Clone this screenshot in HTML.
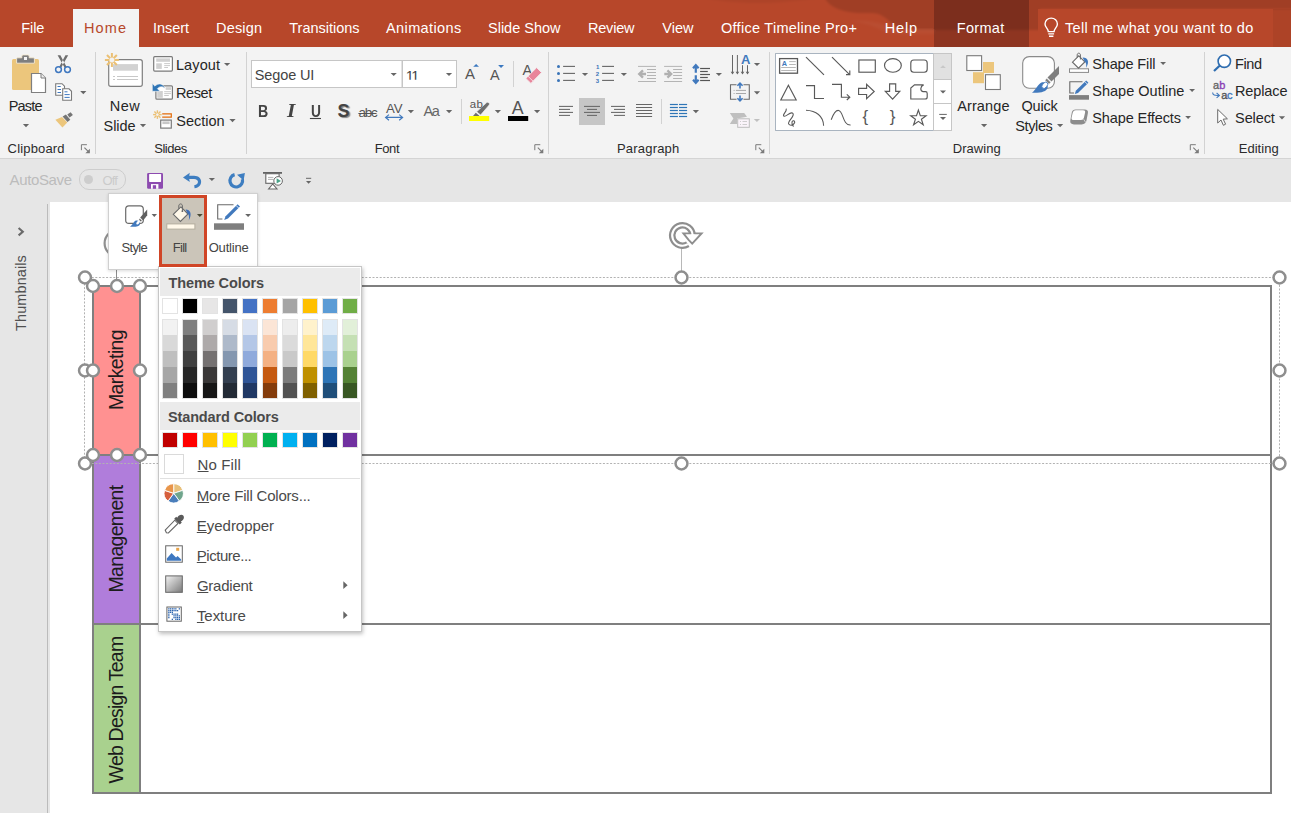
<!DOCTYPE html>
<html lang="en"><head><meta charset="utf-8"><title>PowerPoint - Shape Fill</title>
<style>
html,body{margin:0;padding:0;}
body{width:1291px;height:813px;overflow:hidden;position:relative;background:#fff;font-family:"Liberation Sans", sans-serif;}
.a{position:absolute;}
.t{position:absolute;white-space:nowrap;line-height:1;}
svg{position:absolute;overflow:visible;}
u{text-decoration:underline;text-underline-offset:1px;text-decoration-thickness:1px;}

.hd{fill:#fff;stroke:#8e8e8e;stroke-width:2.5;}

</style></head><body>
<div class="a" style="left:0;top:0;width:1291px;height:47px;background:#B7472A"></div><div class="a" style="left:934px;top:0;width:95px;height:47px;background:#8E3521"></div><svg class="a" style="left:0;top:0" width="1291" height="47"><defs><filter id="bl" x="-5%" y="-30%" width="110%" height="160%"><feGaussianBlur stdDeviation="1.2"/></filter></defs><g filter="url(#bl)"><path d="M824 -3 C 830 9, 846 14, 872 13 C 888 13, 892 30, 908 30 L 1040 30 L 1040 9 L 1300 9 L 1300 -3 Z" fill="rgba(0,0,0,0.125)"/><path d="M700 -3 C 730 4, 770 6, 824 -3 Z" fill="rgba(0,0,0,0.05)"/><path d="M846 22 C 870 20, 880 34, 900 34 L 934 34 L 934 30 L 905 30 C 890 30, 880 17, 846 22 Z" fill="rgba(255,255,255,0.03)"/></g><rect x="1273" y="9" width="18" height="38" fill="rgba(0,0,0,0.05)"/></svg><div class="a" style="left:1038px;top:9px;width:235px;height:38px;background:#B7472A"></div><svg class="a" style="left:0;top:0" width="1291" height="47"><path d="M1048.3 31.6 C1048.3 28.6 1045 27.6 1045 23.9 C1045 20.6 1047.8 18.1 1051.2 18.1 C1054.6 18.1 1057.4 20.6 1057.4 23.9 C1057.4 27.6 1054.1 28.6 1054.1 31.6 Z M1048.3 33.9 H1054.1 M1049 36.2 H1053.4" fill="none" stroke="#fff" stroke-width="1.4"/></svg><div class="a" style="left:73px;top:9px;width:66px;height:38px;background:#F3F3F3"></div><div class="a" style="left:0;top:47px;width:1291px;height:111px;background:#F3F3F3"></div><div class="a" style="left:0;top:158px;width:1291px;height:1px;background:#D4D4D4"></div><div class="a" style="left:0;top:159px;width:1291px;height:43px;background:#E6E6E6"></div><div class="a" style="left:0;top:202px;width:50px;height:611px;background:#E6E6E6"></div><div class="a" style="left:47px;top:204px;width:1px;height:609px;background:#BBBBBB"></div><div class="a" style="left:95px;top:52px;width:1px;height:102px;background:#D2D2D2"></div><div class="a" style="left:246px;top:52px;width:1px;height:102px;background:#D2D2D2"></div><div class="a" style="left:548px;top:52px;width:1px;height:102px;background:#D2D2D2"></div><div class="a" style="left:769px;top:52px;width:1px;height:102px;background:#D2D2D2"></div><div class="a" style="left:1204px;top:52px;width:1px;height:102px;background:#D2D2D2"></div><div class="a" style="left:92px;top:285px;width:1176px;height:505px;border:2px solid #7F7F7F;box-sizing:content-box"></div><div class="a" style="left:92px;top:454px;width:1180px;height:2px;background:#7F7F7F"></div><div class="a" style="left:92px;top:623px;width:1180px;height:2px;background:#7F7F7F"></div><div class="a" style="left:139px;top:285px;width:2px;height:508px;background:#7F7F7F"></div><div class="a" style="left:94px;top:287px;width:45px;height:167px;background:#FF9191"></div><div class="a" style="left:94px;top:456px;width:45px;height:167px;background:#B07DDB"></div><div class="a" style="left:94px;top:625px;width:45px;height:167px;background:#A9D18E"></div><div class="a" style="left:117px;top:370px;width:0;height:0;"><div style="position:absolute;transform:translate(-50%,-50%) rotate(-90deg);white-space:nowrap;font-size:19.5px;letter-spacing:-0.6px;color:#1c1c1c;line-height:1">Marketing</div></div><div class="a" style="left:117px;top:539px;width:0;height:0;"><div style="position:absolute;transform:translate(-50%,-50%) rotate(-90deg);white-space:nowrap;font-size:19.5px;letter-spacing:-0.69px;color:#1c1c1c;line-height:1">Management</div></div><div class="a" style="left:117px;top:709.6px;width:0;height:0;"><div style="position:absolute;transform:translate(-50%,-50%) rotate(-90deg);white-space:nowrap;font-size:19.5px;letter-spacing:-0.79px;color:#1c1c1c;line-height:1">Web Design Team</div></div><svg class="a" style="left:0;top:0" width="1291" height="813"><rect x="84.5" y="277.5" width="1195" height="186" fill="none" stroke="#b2b2b2" stroke-width="1" stroke-dasharray="2 1.6"/><line x1="681.5" y1="248" x2="681.5" y2="272" stroke="#b8b8b8" stroke-width="1"/><line x1="116.5" y1="256" x2="116.5" y2="280" stroke="#8c8c8c" stroke-width="1"/><circle cx="118" cy="243.3" r="13.4" fill="#fff" stroke="#909090" stroke-width="2.2"/><circle class="hd" cx="85" cy="277.5" r="5.95"/><circle class="hd" cx="681.5" cy="277.5" r="5.95"/><circle class="hd" cx="1279.5" cy="277.5" r="5.95"/><circle class="hd" cx="85" cy="370.5" r="5.95"/><circle class="hd" cx="1279.5" cy="370.5" r="5.95"/><circle class="hd" cx="85" cy="463.5" r="5.95"/><circle class="hd" cx="681.5" cy="463.5" r="5.95"/><circle class="hd" cx="1279.5" cy="463.5" r="5.95"/><circle class="hd" cx="93" cy="286" r="5.95"/><circle class="hd" cx="117" cy="286" r="5.95"/><circle class="hd" cx="140" cy="286" r="5.95"/><circle class="hd" cx="93" cy="370.5" r="5.95"/><circle class="hd" cx="140" cy="370.5" r="5.95"/><circle class="hd" cx="93" cy="455" r="5.95"/><circle class="hd" cx="117" cy="455" r="5.95"/><circle class="hd" cx="140" cy="455" r="5.95"/><path d="M687.81 244.15 A10.2 10.2 0 1 1 692.60 235.00" fill="none" stroke="#8e8e8e" stroke-width="6.5"/><path d="M683.4 233.4 H701.6 L692.2 243.6 L688.6 239.8 Z" fill="#fff" stroke="#8e8e8e" stroke-width="1.9" stroke-linejoin="miter"/><path d="M687.81 244.15 A10.2 10.2 0 1 1 692.60 235.00" fill="none" stroke="#fff" stroke-width="2.1"/><path d="M690.6 234.6 L694.6 234.6 L694.2 238.6 Z" fill="#fff"/></svg><div class="a" style="left:108px;top:193px;width:148px;height:75px;background:#fff;border:1px solid #D0D0D0;box-shadow:0 1px 3px rgba(0,0,0,0.15)"></div><div class="a" style="left:158px;top:266px;width:202px;height:364px;background:#fff;border:1px solid #C6C6C6;box-shadow:1px 2px 4px rgba(0,0,0,0.25)"></div><div class="a" style="left:160px;top:268px;width:200px;height:28px;background:#EBEBEB"></div><div class="a" style="left:160px;top:402px;width:200px;height:28px;background:#EBEBEB"></div><div class="a" style="left:159px;top:195px;width:42px;height:66px;background:#CBC5B9;border:3px solid #D04526"></div><svg class="a" style="left:0;top:0" width="400" height="270"><rect x="125.7" y="205.8" width="17.6" height="17.6" rx="3.2" fill="#fff" stroke="#6a6a6a" stroke-width="1.2"/><path d="M147.2 209.6 V215.2 L143.2 220.4 L140.2 217.6 Z" fill="#5f5f5f"/><path d="M142 220.6 L140.9 221.8 L138.8 219.8 L139.9 218.6 Z" fill="#5f5f5f" stroke="#fff" stroke-width="0.4"/><path d="M130 226.7 C133 224.6 133.6 221.6 135.8 220.6 C138.2 219.8 140.6 221.8 140 224.2 C139.2 226.6 135.6 227 130 226.7 Z" fill="#4179BD"/><ellipse cx="138" cy="222.6" rx="1.3" ry="2.2" transform="rotate(40 138 222.6)" fill="#fff"/><path d="M151.6 214.1 h5.4 l-2.7 3 Z" fill="#666666"/><rect x="166.8" y="223.9" width="28.1" height="5.2" fill="#FFF8E9" stroke="#B3AD9E" stroke-width="1"/><path d="M180.9 206.9 L188 214 L180.4 221.4 L173.3 214.3 Z" fill="#FFF8E9" stroke="#6a6a6a" stroke-width="1.1"/><path d="M182.4 211 V206 C182.4 203.2 178.8 203.2 178.8 206 V208.8" fill="none" stroke="#6a6a6a" stroke-width="1"/><circle cx="182.4" cy="211.2" r="0.9" fill="#6a6a6a"/><path d="M185.6 209.4 C190 209.2 192.6 213.6 188.8 220.4 C189.4 216.6 189 214.4 187.4 213.2 Z" fill="#3F6FB5"/><path d="M196.9 214.1 h5.8 l-2.9 3 Z" fill="#4a4a35"/><path d="M233.5 204.8 H217.7 V219 H222.4" fill="none" stroke="#6a6a6a" stroke-width="1.1"/><path d="M237.6 204.2 L240 206.6 L228 218.6 L224.2 220 L225.6 216.2 Z" fill="#4179BD"/><path d="M236.2 205.6 L238.6 208" stroke="#fff" stroke-width="0.8"/><rect x="214" y="223.3" width="30" height="6.5" fill="#7F7F7F"/><path d="M245.2 214.1 h5.8 l-2.9 3 Z" fill="#666666"/></svg><div class="a" style="left:162px;top:298px;width:14px;height:14px;background:#FFFFFF;border:1px solid #E3E3E3"></div><div class="a" style="left:162px;top:319px;width:14px;height:78px;border:1px solid #E3E3E3"></div><div class="a" style="left:163px;top:320px;width:14px;height:15px;background:#F2F2F2"></div><div class="a" style="left:163px;top:335px;width:14px;height:16px;background:#D9D9D9"></div><div class="a" style="left:163px;top:351px;width:14px;height:16px;background:#BFBFBF"></div><div class="a" style="left:163px;top:367px;width:14px;height:16px;background:#A6A6A6"></div><div class="a" style="left:163px;top:383px;width:14px;height:15px;background:#7F7F7F"></div><div class="a" style="left:162px;top:432px;width:14px;height:14px;background:#C00000;border:1px solid #E3E3E3"></div><div class="a" style="left:182px;top:298px;width:14px;height:14px;background:#000000;border:1px solid #E3E3E3"></div><div class="a" style="left:182px;top:319px;width:14px;height:78px;border:1px solid #E3E3E3"></div><div class="a" style="left:183px;top:320px;width:14px;height:15px;background:#7F7F7F"></div><div class="a" style="left:183px;top:335px;width:14px;height:16px;background:#595959"></div><div class="a" style="left:183px;top:351px;width:14px;height:16px;background:#404040"></div><div class="a" style="left:183px;top:367px;width:14px;height:16px;background:#262626"></div><div class="a" style="left:183px;top:383px;width:14px;height:15px;background:#0D0D0D"></div><div class="a" style="left:182px;top:432px;width:14px;height:14px;background:#FF0000;border:1px solid #E3E3E3"></div><div class="a" style="left:202px;top:298px;width:14px;height:14px;background:#E7E6E6;border:1px solid #E3E3E3"></div><div class="a" style="left:202px;top:319px;width:14px;height:78px;border:1px solid #E3E3E3"></div><div class="a" style="left:203px;top:320px;width:14px;height:15px;background:#D0CECE"></div><div class="a" style="left:203px;top:335px;width:14px;height:16px;background:#AEAAAA"></div><div class="a" style="left:203px;top:351px;width:14px;height:16px;background:#757171"></div><div class="a" style="left:203px;top:367px;width:14px;height:16px;background:#3A3838"></div><div class="a" style="left:203px;top:383px;width:14px;height:15px;background:#161616"></div><div class="a" style="left:202px;top:432px;width:14px;height:14px;background:#FFC000;border:1px solid #E3E3E3"></div><div class="a" style="left:222px;top:298px;width:14px;height:14px;background:#44546A;border:1px solid #E3E3E3"></div><div class="a" style="left:222px;top:319px;width:14px;height:78px;border:1px solid #E3E3E3"></div><div class="a" style="left:223px;top:320px;width:14px;height:15px;background:#D6DCE5"></div><div class="a" style="left:223px;top:335px;width:14px;height:16px;background:#ADB9CA"></div><div class="a" style="left:223px;top:351px;width:14px;height:16px;background:#8497B0"></div><div class="a" style="left:223px;top:367px;width:14px;height:16px;background:#333F50"></div><div class="a" style="left:223px;top:383px;width:14px;height:15px;background:#222A35"></div><div class="a" style="left:222px;top:432px;width:14px;height:14px;background:#FFFF00;border:1px solid #E3E3E3"></div><div class="a" style="left:242px;top:298px;width:14px;height:14px;background:#4472C4;border:1px solid #E3E3E3"></div><div class="a" style="left:242px;top:319px;width:14px;height:78px;border:1px solid #E3E3E3"></div><div class="a" style="left:243px;top:320px;width:14px;height:15px;background:#DAE3F3"></div><div class="a" style="left:243px;top:335px;width:14px;height:16px;background:#B4C7E7"></div><div class="a" style="left:243px;top:351px;width:14px;height:16px;background:#8FAADC"></div><div class="a" style="left:243px;top:367px;width:14px;height:16px;background:#2F5597"></div><div class="a" style="left:243px;top:383px;width:14px;height:15px;background:#203864"></div><div class="a" style="left:242px;top:432px;width:14px;height:14px;background:#92D050;border:1px solid #E3E3E3"></div><div class="a" style="left:262px;top:298px;width:14px;height:14px;background:#ED7D31;border:1px solid #E3E3E3"></div><div class="a" style="left:262px;top:319px;width:14px;height:78px;border:1px solid #E3E3E3"></div><div class="a" style="left:263px;top:320px;width:14px;height:15px;background:#FBE5D6"></div><div class="a" style="left:263px;top:335px;width:14px;height:16px;background:#F8CBAD"></div><div class="a" style="left:263px;top:351px;width:14px;height:16px;background:#F4B183"></div><div class="a" style="left:263px;top:367px;width:14px;height:16px;background:#C55A11"></div><div class="a" style="left:263px;top:383px;width:14px;height:15px;background:#843C0C"></div><div class="a" style="left:262px;top:432px;width:14px;height:14px;background:#00B050;border:1px solid #E3E3E3"></div><div class="a" style="left:282px;top:298px;width:14px;height:14px;background:#A5A5A5;border:1px solid #E3E3E3"></div><div class="a" style="left:282px;top:319px;width:14px;height:78px;border:1px solid #E3E3E3"></div><div class="a" style="left:283px;top:320px;width:14px;height:15px;background:#EDEDED"></div><div class="a" style="left:283px;top:335px;width:14px;height:16px;background:#DBDBDB"></div><div class="a" style="left:283px;top:351px;width:14px;height:16px;background:#C9C9C9"></div><div class="a" style="left:283px;top:367px;width:14px;height:16px;background:#7C7C7C"></div><div class="a" style="left:283px;top:383px;width:14px;height:15px;background:#525252"></div><div class="a" style="left:282px;top:432px;width:14px;height:14px;background:#00B0F0;border:1px solid #E3E3E3"></div><div class="a" style="left:302px;top:298px;width:14px;height:14px;background:#FFC000;border:1px solid #E3E3E3"></div><div class="a" style="left:302px;top:319px;width:14px;height:78px;border:1px solid #E3E3E3"></div><div class="a" style="left:303px;top:320px;width:14px;height:15px;background:#FFF2CC"></div><div class="a" style="left:303px;top:335px;width:14px;height:16px;background:#FFE699"></div><div class="a" style="left:303px;top:351px;width:14px;height:16px;background:#FFD966"></div><div class="a" style="left:303px;top:367px;width:14px;height:16px;background:#BF9000"></div><div class="a" style="left:303px;top:383px;width:14px;height:15px;background:#7F6000"></div><div class="a" style="left:302px;top:432px;width:14px;height:14px;background:#0070C0;border:1px solid #E3E3E3"></div><div class="a" style="left:322px;top:298px;width:14px;height:14px;background:#5B9BD5;border:1px solid #E3E3E3"></div><div class="a" style="left:322px;top:319px;width:14px;height:78px;border:1px solid #E3E3E3"></div><div class="a" style="left:323px;top:320px;width:14px;height:15px;background:#DEEBF7"></div><div class="a" style="left:323px;top:335px;width:14px;height:16px;background:#BDD7EE"></div><div class="a" style="left:323px;top:351px;width:14px;height:16px;background:#9DC3E6"></div><div class="a" style="left:323px;top:367px;width:14px;height:16px;background:#2E75B6"></div><div class="a" style="left:323px;top:383px;width:14px;height:15px;background:#1F4E79"></div><div class="a" style="left:322px;top:432px;width:14px;height:14px;background:#002060;border:1px solid #E3E3E3"></div><div class="a" style="left:342px;top:298px;width:14px;height:14px;background:#70AD47;border:1px solid #E3E3E3"></div><div class="a" style="left:342px;top:319px;width:14px;height:78px;border:1px solid #E3E3E3"></div><div class="a" style="left:343px;top:320px;width:14px;height:15px;background:#E2F0D9"></div><div class="a" style="left:343px;top:335px;width:14px;height:16px;background:#C5E0B4"></div><div class="a" style="left:343px;top:351px;width:14px;height:16px;background:#A9D18E"></div><div class="a" style="left:343px;top:367px;width:14px;height:16px;background:#548235"></div><div class="a" style="left:343px;top:383px;width:14px;height:15px;background:#385723"></div><div class="a" style="left:342px;top:432px;width:14px;height:14px;background:#7030A0;border:1px solid #E3E3E3"></div><div class="a" style="left:164px;top:454px;width:18px;height:18px;background:#fff;border:1px solid #DADADA"></div><div class="a" style="left:160px;top:478px;width:200px;height:1px;background:#E1E1E1"></div><svg class="a" style="left:0;top:0" width="400" height="640"><path d="M173.7 493.3 L173.70 483.70 A9.6 9.6 0 0 1 182.83 490.33 Z" fill="#E8C07A" stroke="#fff" stroke-width="0.9"/><path d="M173.7 493.3 L182.83 490.33 A9.6 9.6 0 0 1 179.34 501.07 Z" fill="#6FA58C" stroke="#fff" stroke-width="0.9"/><path d="M173.7 493.3 L179.34 501.07 A9.6 9.6 0 0 1 168.06 501.07 Z" fill="#4A7EBB" stroke="#fff" stroke-width="0.9"/><path d="M173.7 493.3 L168.06 501.07 A9.6 9.6 0 0 1 164.57 490.33 Z" fill="#D65F3C" stroke="#fff" stroke-width="0.9"/><path d="M173.7 493.3 L164.57 490.33 A9.6 9.6 0 0 1 173.70 483.70 Z" fill="#E8954A" stroke="#fff" stroke-width="0.9"/><path d="M166.4 532.8 L165.2 530 L174.8 520.2 L178 523.4 L168.4 533 Z" fill="#fff" stroke="#666" stroke-width="1.1"/><path d="M174.2 518.8 L176.2 516.8 L177.2 517.8 C178.4 515 181.6 513.8 183.2 515.4 C184.8 517 183.6 520.2 180.8 521.4 L181.8 522.4 L179.8 524.4 Z" fill="#5a5a5a"/><rect x="165.7" y="545.8" width="16.6" height="16.4" fill="#fff" stroke="#666" stroke-width="1"/><path d="M166.8 560.8 V558.4 L171.6 553 L176 557.6 L177.6 556 L181.2 559.6 V560.8 Z" fill="#3F78C0"/><rect x="176.2" y="547.8" width="3" height="3" fill="#E8A44A"/><defs><linearGradient id="gg" x1="0" y1="0" x2="1" y2="1"><stop offset="0" stop-color="#F4F4F4"/><stop offset="1" stop-color="#7A7A7A"/></linearGradient></defs><rect x="165.7" y="575.9" width="16.6" height="16.4" fill="url(#gg)" stroke="#666" stroke-width="1"/><rect x="166.9" y="607" width="14.4" height="14.2" fill="#fff" stroke="#666" stroke-width="1"/><rect x="168.2" y="608.2" width="1.3" height="1.3" fill="#2F66B0"/><rect x="169.9" y="608.2" width="1.3" height="1.3" fill="#2F66B0"/><rect x="171.7" y="608.2" width="1.3" height="1.3" fill="#2F66B0"/><rect x="173.4" y="608.2" width="1.3" height="1.3" fill="#2F66B0"/><rect x="175.2" y="608.2" width="1.3" height="1.3" fill="#2F66B0"/><rect x="178.7" y="608.2" width="1.3" height="1.3" fill="#2F66B0"/><rect x="168.2" y="610.0" width="1.3" height="1.3" fill="#2F66B0"/><rect x="169.9" y="610.0" width="1.3" height="1.3" fill="#2F66B0"/><rect x="171.7" y="610.0" width="1.3" height="1.3" fill="#2F66B0"/><rect x="173.4" y="610.0" width="1.3" height="1.3" fill="#2F66B0"/><rect x="175.2" y="610.0" width="1.3" height="1.3" fill="#2F66B0"/><rect x="176.9" y="610.0" width="1.3" height="1.3" fill="#2F66B0"/><rect x="168.2" y="611.7" width="1.3" height="1.3" fill="#2F66B0"/><rect x="169.9" y="611.7" width="1.3" height="1.3" fill="#2F66B0"/><rect x="171.7" y="611.7" width="1.3" height="1.3" fill="#2F66B0"/><rect x="168.2" y="613.5" width="1.3" height="1.3" fill="#2F66B0"/><rect x="171.7" y="613.5" width="1.3" height="1.3" fill="#2F66B0"/><rect x="173.4" y="613.5" width="1.3" height="1.3" fill="#2F66B0"/><rect x="175.2" y="613.5" width="1.3" height="1.3" fill="#2F66B0"/><rect x="176.9" y="613.5" width="1.3" height="1.3" fill="#2F66B0"/><rect x="168.2" y="615.2" width="1.3" height="1.3" fill="#2F66B0"/><rect x="173.4" y="615.2" width="1.3" height="1.3" fill="#2F66B0"/><rect x="175.2" y="615.2" width="1.3" height="1.3" fill="#2F66B0"/><rect x="176.9" y="615.2" width="1.3" height="1.3" fill="#2F66B0"/><rect x="178.7" y="615.2" width="1.3" height="1.3" fill="#2F66B0"/><rect x="168.2" y="617.0" width="1.3" height="1.3" fill="#2F66B0"/><rect x="173.4" y="617.0" width="1.3" height="1.3" fill="#2F66B0"/><rect x="175.2" y="617.0" width="1.3" height="1.3" fill="#2F66B0"/><rect x="176.9" y="617.0" width="1.3" height="1.3" fill="#2F66B0"/><rect x="178.7" y="617.0" width="1.3" height="1.3" fill="#2F66B0"/><rect x="171.7" y="618.7" width="1.3" height="1.3" fill="#2F66B0"/><rect x="175.2" y="618.7" width="1.3" height="1.3" fill="#2F66B0"/><rect x="176.9" y="618.7" width="1.3" height="1.3" fill="#2F66B0"/><rect x="178.7" y="618.7" width="1.3" height="1.3" fill="#2F66B0"/></svg><svg class="a" style="left:343px;top:581px" width="8" height="10"><path d="M0.3 0.3 L4.6 4.2 L0.3 8.1 Z" fill="#666"/></svg><svg class="a" style="left:343px;top:611px" width="8" height="10"><path d="M0.3 0.3 L4.6 4.2 L0.3 8.1 Z" fill="#666"/></svg><div class="a" style="left:79px;top:169px;width:45px;height:19px;border:1px solid #CDCDCD;border-radius:10px"></div><div class="a" style="left:84px;top:175px;width:9px;height:9px;background:#CDCDCD;border-radius:5px"></div><div class="a" style="left:21.4px;top:292.8px;width:0;height:0;"><div style="position:absolute;transform:translate(-50%,-50%) rotate(-90deg);white-space:nowrap;font-size:14.5px;letter-spacing:0.1px;color:#505050;line-height:1">Thumbnails</div></div><svg class="a" style="left:0px;top:0px" width="50" height="300"><path d="M18.6 228 L22.8 231.7 L18.6 235.4" fill="none" stroke="#6a6a6a" stroke-width="2.1"/></svg><svg class="a" style="left:0;top:0" width="1291" height="160"><rect x="12" y="59" width="27" height="31" rx="1.5" fill="#ECC67C"/><path d="M16.6 63.2 V58.8 Q16.6 57.8 17.6 57.8 H21.8 V56.2 Q21.8 54.9 23.2 54.9 H27.8 Q29.2 54.9 29.2 56.2 V57.8 H33.4 Q34.4 57.8 34.4 58.8 V63.2 Z" fill="#7F7F7F" stroke="#F6EBD2" stroke-width="0.9"/><rect x="24" y="57" width="3" height="3" fill="#F3F3F3"/><path d="M31.5 73.5 H41 L45.5 78 V92.5 H31.5 Z" fill="#fff" stroke="#7F7F7F" stroke-width="1.2"/><path d="M41 73.5 V78 H45.5" fill="#EDEDED" stroke="#7F7F7F" stroke-width="1"/><path d="M22.9 124 h6.2 l-3.1 3.2 Z" fill="#666666"/><path d="M57.6 55.2 H60.4 L66.6 67 L64.8 68 Z M68.2 55.2 H65.4 L59.2 67 L61 68 Z" fill="#6E6E6E"/><circle cx="58.5" cy="69.6" r="2.9" fill="none" stroke="#3F78C0" stroke-width="1.5"/><circle cx="67.5" cy="69.6" r="2.9" fill="none" stroke="#3F78C0" stroke-width="1.5"/><path d="M55.7 83.7 H62 L64.5 86.2 V95.3 H55.7 Z" fill="#fff" stroke="#7a7a7a" stroke-width="1.1"/><path d="M57.5 86.5 h3.2 M57.5 89.5 h3.5 M57.5 92.5 h3.5" stroke="#3F78C0" stroke-width="1"/><path d="M62.7 88.8 H69 L71.5 91.3 V100.3 H62.7 Z" fill="#fff" stroke="#7a7a7a" stroke-width="1.1"/><path d="M64.5 91.8 h3 M64.5 94.6 h5.2 M64.5 97.4 h5.2" stroke="#3F78C0" stroke-width="1"/><path d="M80.2 91 h6.2 l-3.1 3.2 Z" fill="#666666"/><path d="M55.4 119.8 L62 117 L67.3 122.4 L62.4 127.4 Z" fill="#ECC67C"/><path d="M62.6 116.5 L65.9 114.5 L70.3 119.8 L67.5 122 Z" fill="#757575"/><path d="M67.3 114.4 L70.6 112.2 L72.9 115.1 L69.5 117.4 Z" fill="#757575"/><path d="M81.4 150.2 V144.7 H86.9" fill="none" stroke="#7a7a7a" stroke-width="1"/><path d="M84.4 147.7 L88.9 152.2" stroke="#7a7a7a" stroke-width="1.1"/><path d="M89.9 148.7 V153.2 H85.4 Z" fill="#7a7a7a"/><rect x="108.7" y="59.6" width="33.6" height="26.8" rx="2.2" fill="#fff" stroke="#7F7F7F" stroke-width="1.2"/><rect x="113" y="64.1" width="25" height="6.6" fill="#D2D2D2"/><line x1="113" y1="76.5" x2="115" y2="76.5" stroke="#C8C8C8" stroke-width="1"/><line x1="117" y1="76.5" x2="138" y2="76.5" stroke="#C8C8C8" stroke-width="1"/><line x1="113" y1="79.5" x2="115" y2="79.5" stroke="#C8C8C8" stroke-width="1"/><line x1="117" y1="79.5" x2="138" y2="79.5" stroke="#C8C8C8" stroke-width="1"/><circle cx="111.9" cy="60" r="3.5" fill="#F3F3F3"/><line x1="114.30" y1="60.00" x2="118.90" y2="60.00" stroke="#EBC074" stroke-width="2"/><line x1="113.60" y1="61.70" x2="116.85" y2="64.95" stroke="#EBC074" stroke-width="2"/><line x1="111.90" y1="62.40" x2="111.90" y2="67.00" stroke="#EBC074" stroke-width="2"/><line x1="110.20" y1="61.70" x2="106.95" y2="64.95" stroke="#EBC074" stroke-width="2"/><line x1="109.50" y1="60.00" x2="104.90" y2="60.00" stroke="#EBC074" stroke-width="2"/><line x1="110.20" y1="58.30" x2="106.95" y2="55.05" stroke="#EBC074" stroke-width="2"/><line x1="111.90" y1="57.60" x2="111.90" y2="53.00" stroke="#EBC074" stroke-width="2"/><line x1="113.60" y1="58.30" x2="116.85" y2="55.05" stroke="#EBC074" stroke-width="2"/><path d="M139.9 124 h6.2 l-3.1 3.2 Z" fill="#666666"/><rect x="153.7" y="56.7" width="18.7" height="14.4" rx="1" fill="#fff" stroke="#7a7a7a" stroke-width="1.2"/><rect x="156.2" y="58.4" width="13.8" height="3.4" fill="#D0D0D0"/><rect x="156.2" y="63.3" width="5.6" height="5.6" fill="#D0D0D0"/><line x1="164.2" y1="63.6" x2="170" y2="63.6" stroke="#C4C4C4" stroke-width="0.9"/><line x1="164.2" y1="65.6" x2="170" y2="65.6" stroke="#C4C4C4" stroke-width="0.9"/><line x1="164.2" y1="67.5" x2="168" y2="67.5" stroke="#C4C4C4" stroke-width="0.9"/><path d="M224 62.9 h6.2 l-3.1 3.2 Z" fill="#666666"/><rect x="155.9" y="85.8" width="16.5" height="13.4" rx="1" fill="#fff" stroke="#7a7a7a" stroke-width="1.2"/><rect x="157.2" y="91" width="5.6" height="6.8" fill="#D0D0D0"/><rect x="165.7" y="87.2" width="5.3" height="2.7" fill="#D0D0D0"/><line x1="164.2" y1="91.7" x2="171" y2="91.7" stroke="#C4C4C4" stroke-width="0.9"/><line x1="164.2" y1="93.6" x2="171" y2="93.6" stroke="#C4C4C4" stroke-width="0.9"/><line x1="164.2" y1="95.5" x2="168.8" y2="95.5" stroke="#C4C4C4" stroke-width="0.9"/><path d="M152.3 83.5 V91.3 H160 L157.4 88.7 C159.5 86.2 162.5 86 165.2 88.3 C163.5 83.6 158 82.3 155 86.2 Z" fill="#2E75B6" stroke="#F3F3F3" stroke-width="0.6"/><line x1="158.70" y1="114.60" x2="161.70" y2="114.60" stroke="#EBC074" stroke-width="1.4"/><line x1="158.32" y1="115.52" x2="160.44" y2="117.64" stroke="#EBC074" stroke-width="1.4"/><line x1="157.40" y1="115.90" x2="157.40" y2="118.90" stroke="#EBC074" stroke-width="1.4"/><line x1="156.48" y1="115.52" x2="154.36" y2="117.64" stroke="#EBC074" stroke-width="1.4"/><line x1="156.10" y1="114.60" x2="153.10" y2="114.60" stroke="#EBC074" stroke-width="1.4"/><line x1="156.48" y1="113.68" x2="154.36" y2="111.56" stroke="#EBC074" stroke-width="1.4"/><line x1="157.40" y1="113.30" x2="157.40" y2="110.30" stroke="#EBC074" stroke-width="1.4"/><line x1="158.32" y1="113.68" x2="160.44" y2="111.56" stroke="#EBC074" stroke-width="1.4"/><path d="M162.2 113.8 H171.3 V117.2 H162.2" fill="none" stroke="#E36C0A" stroke-width="1.2"/><rect x="160.7" y="120.1" width="10.6" height="8" fill="#fff" stroke="#7a7a7a" stroke-width="1.2"/><rect x="162.4" y="121.4" width="7.2" height="2.7" fill="#C8C8C8"/><path d="M229.4 119 h6.2 l-3.1 3.2 Z" fill="#666666"/><rect x="251.5" y="60.5" width="150.5" height="27" fill="#fff" stroke="#C6C6C6" stroke-width="1"/><rect x="402.5" y="60.5" width="54" height="27" fill="#fff" stroke="#C6C6C6" stroke-width="1"/><path d="M390.6 72.9 h6.2 l-3.1 3.2 Z" fill="#666666"/><path d="M445.9 72.9 h6.2 l-3.1 3.2 Z" fill="#666666"/><path d="M473.2 66.8 L476.1 63.9 L479 66.8 Z" fill="#3A78C0"/><path d="M498.1 65 L504 65 L501.05 68 Z" fill="#3A78C0"/><line x1="513.5" y1="61" x2="513.5" y2="87" stroke="#D2D2D2"/><text x="522.6" y="75" font-size="15.5" fill="#555" textLength="9.6" lengthAdjust="spacingAndGlyphs">A</text><path d="M536.7 67.6 L541.6 72.6 L530.9 83.4 L525.8 78.4 Z" fill="#E8859B" stroke="#F3F3F3" stroke-width="0.9" stroke-linejoin="round"/><path d="M528 76.2 L533.2 81.3" stroke="#F6D8DF" stroke-width="1"/><line x1="309.9" y1="118.5" x2="321" y2="118.5" stroke="#444" stroke-width="1.1"/><path d="M386 117.4 H402.2 M389 114.6 L385.6 117.4 L389 120.2 M399.2 114.6 L402.6 117.4 L399.2 120.2" fill="none" stroke="#4179BD" stroke-width="1.2"/><path d="M407.8 110 h6.2 l-3.1 3.2 Z" fill="#666666"/><path d="M446 110 h6.2 l-3.1 3.2 Z" fill="#666666"/><line x1="461.5" y1="99" x2="461.5" y2="124" stroke="#D2D2D2"/><path d="M486.6 102.6 Q487.8 101.6 489 102.8 Q490 104 489.2 105 L480.6 115 L476.6 111.8 Z" fill="#6E6E6E" stroke="#F3F3F3" stroke-width="0.7"/><path d="M475.8 112.8 L479.4 115.8 L478.6 116.2 L472.8 116.2 Z" fill="#6E6E6E"/><rect x="469" y="116" width="20.2" height="5" fill="#FFFF00"/><path d="M494.8 110 h6.2 l-3.1 3.2 Z" fill="#666666"/><rect x="508" y="116" width="20.2" height="5" fill="#000"/><path d="M534 110 h6.2 l-3.1 3.2 Z" fill="#666666"/><path d="M534.8 150.2 V144.7 H540.3" fill="none" stroke="#7a7a7a" stroke-width="1"/><path d="M537.8 147.7 L542.3 152.2" stroke="#7a7a7a" stroke-width="1.1"/><path d="M543.3 148.7 V153.2 H538.8 Z" fill="#7a7a7a"/><circle cx="558.5" cy="66.4" r="1.5" fill="#3A74B8"/><line x1="563.1" y1="66.4" x2="575" y2="66.4" stroke="#666" stroke-width="1.1"/><line x1="602.1" y1="66.4" x2="614" y2="66.4" stroke="#666" stroke-width="1.1"/><circle cx="558.5" cy="73.4" r="1.5" fill="#3A74B8"/><line x1="563.1" y1="73.4" x2="575" y2="73.4" stroke="#666" stroke-width="1.1"/><line x1="602.1" y1="73.4" x2="614" y2="73.4" stroke="#666" stroke-width="1.1"/><circle cx="558.5" cy="80.4" r="1.5" fill="#3A74B8"/><line x1="563.1" y1="80.4" x2="575" y2="80.4" stroke="#666" stroke-width="1.1"/><line x1="602.1" y1="80.4" x2="614" y2="80.4" stroke="#666" stroke-width="1.1"/><path d="M581.9 72.9 h6.2 l-3.1 3.2 Z" fill="#666666"/><path d="M620.8 72.9 h6.2 l-3.1 3.2 Z" fill="#666666"/><line x1="638" y1="66.4" x2="656" y2="66.4" stroke="#B4B4B4" stroke-width="1"/><line x1="638" y1="81.5" x2="656" y2="81.5" stroke="#B4B4B4" stroke-width="1"/><line x1="647" y1="69.5" x2="656" y2="69.5" stroke="#B4B4B4" stroke-width="1"/><line x1="647" y1="72.5" x2="656" y2="72.5" stroke="#B4B4B4" stroke-width="1"/><line x1="647" y1="75.5" x2="656" y2="75.5" stroke="#B4B4B4" stroke-width="1"/><line x1="647" y1="78.5" x2="656" y2="78.5" stroke="#B4B4B4" stroke-width="1"/><path d="M646 74 H640.5 M643 70.4 L639.2 74 L643 77.6" fill="none" stroke="#B0B0B0" stroke-width="2.3"/><line x1="664.1" y1="66.4" x2="682.1" y2="66.4" stroke="#B4B4B4" stroke-width="1"/><line x1="664.1" y1="81.5" x2="682.1" y2="81.5" stroke="#B4B4B4" stroke-width="1"/><line x1="673.1" y1="69.5" x2="682.1" y2="69.5" stroke="#B4B4B4" stroke-width="1"/><line x1="673.1" y1="72.5" x2="682.1" y2="72.5" stroke="#B4B4B4" stroke-width="1"/><line x1="673.1" y1="75.5" x2="682.1" y2="75.5" stroke="#B4B4B4" stroke-width="1"/><line x1="673.1" y1="78.5" x2="682.1" y2="78.5" stroke="#B4B4B4" stroke-width="1"/><path d="M664.3 74 H670 M667.4 70.4 L671.2 74 L667.4 77.6" fill="none" stroke="#B0B0B0" stroke-width="2.3"/><path d="M695.8 66 V72.8 M693 68.2 L695.8 65.2 L698.6 68.2 M695.8 75.2 V82 M693 79.8 L695.8 82.8 L698.6 79.8" fill="none" stroke="#4179BD" stroke-width="2.2"/><line x1="700.1" y1="68.5" x2="710" y2="68.5" stroke="#555" stroke-width="1.2"/><line x1="700.1" y1="71.5" x2="707.8" y2="71.5" stroke="#555" stroke-width="1.2"/><line x1="700.1" y1="74.5" x2="710" y2="74.5" stroke="#555" stroke-width="1.2"/><line x1="700.1" y1="77.5" x2="707.8" y2="77.5" stroke="#555" stroke-width="1.2"/><line x1="700.1" y1="80.5" x2="710" y2="80.5" stroke="#555" stroke-width="1.2"/><path d="M715.8 72.9 h6.2 l-3.1 3.2 Z" fill="#666666"/><rect x="579" y="98" width="26" height="27" fill="#C6C6C6"/><line x1="559" y1="106.4" x2="573" y2="106.4" stroke="#666" stroke-width="1.05"/><line x1="584" y1="106.4" x2="600" y2="106.4" stroke="#666" stroke-width="1.05"/><line x1="611" y1="106.4" x2="625" y2="106.4" stroke="#666" stroke-width="1.05"/><line x1="559" y1="109.4" x2="570" y2="109.4" stroke="#666" stroke-width="1.05"/><line x1="587" y1="109.4" x2="597" y2="109.4" stroke="#666" stroke-width="1.05"/><line x1="614" y1="109.4" x2="625" y2="109.4" stroke="#666" stroke-width="1.05"/><line x1="559" y1="112.4" x2="573" y2="112.4" stroke="#666" stroke-width="1.05"/><line x1="584" y1="112.4" x2="600" y2="112.4" stroke="#666" stroke-width="1.05"/><line x1="611" y1="112.4" x2="625" y2="112.4" stroke="#666" stroke-width="1.05"/><line x1="559" y1="115.4" x2="570" y2="115.4" stroke="#666" stroke-width="1.05"/><line x1="587" y1="115.4" x2="597" y2="115.4" stroke="#666" stroke-width="1.05"/><line x1="614" y1="115.4" x2="625" y2="115.4" stroke="#666" stroke-width="1.05"/><line x1="636" y1="104.5" x2="652.1" y2="104.5" stroke="#666" stroke-width="1.05"/><line x1="669.9" y1="104.5" x2="677.9" y2="104.5" stroke="#2E75B6" stroke-width="1.2"/><line x1="679" y1="104.5" x2="687.1" y2="104.5" stroke="#2E75B6" stroke-width="1.2"/><line x1="636" y1="107.5" x2="652.1" y2="107.5" stroke="#666" stroke-width="1.05"/><line x1="669.9" y1="107.5" x2="677.9" y2="107.5" stroke="#2E75B6" stroke-width="1.2"/><line x1="679" y1="107.5" x2="687.1" y2="107.5" stroke="#2E75B6" stroke-width="1.2"/><line x1="636" y1="110.5" x2="652.1" y2="110.5" stroke="#666" stroke-width="1.05"/><line x1="669.9" y1="110.5" x2="677.9" y2="110.5" stroke="#2E75B6" stroke-width="1.2"/><line x1="679" y1="110.5" x2="687.1" y2="110.5" stroke="#2E75B6" stroke-width="1.2"/><line x1="636" y1="113.5" x2="652.1" y2="113.5" stroke="#666" stroke-width="1.05"/><line x1="669.9" y1="113.5" x2="677.9" y2="113.5" stroke="#2E75B6" stroke-width="1.2"/><line x1="679" y1="113.5" x2="687.1" y2="113.5" stroke="#2E75B6" stroke-width="1.2"/><line x1="636" y1="116.5" x2="652.1" y2="116.5" stroke="#666" stroke-width="1.05"/><line x1="669.9" y1="116.5" x2="677.9" y2="116.5" stroke="#2E75B6" stroke-width="1.2"/><line x1="679" y1="116.5" x2="687.1" y2="116.5" stroke="#2E75B6" stroke-width="1.2"/><line x1="661.5" y1="99" x2="661.5" y2="124" stroke="#D2D2D2"/><path d="M692.8 110 h6.2 l-3.1 3.2 Z" fill="#666666"/><path d="M732.5 55 V73.5 M737.4 55 V73.5 M742.5 65.2 V73.5 M747.5 65.2 V73.5" stroke="#666" stroke-width="1" fill="none"/><path d="M730.7 71.8 L732.5 74.6 L734.3 71.8 Z" fill="#666"/><path d="M735.6 71.8 L737.4 74.6 L739.1999999999999 71.8 Z" fill="#666"/><path d="M740.7 71.8 L742.5 74.6 L744.3 71.8 Z" fill="#666"/><path d="M745.7 71.8 L747.5 74.6 L749.3 71.8 Z" fill="#666"/><path d="M753.9 62.9 h6.2 l-3.1 3.2 Z" fill="#666666"/><path d="M736.5 84.7 H730.5 V99.3 H736.5 M743.5 84.7 H749.3 V99.3 H743.5" fill="none" stroke="#6a6a6a" stroke-width="1.1"/><line x1="735.9" y1="90.4" x2="746" y2="90.4" stroke="#A8A8A8" stroke-width="1"/><line x1="735.9" y1="93.5" x2="746" y2="93.5" stroke="#A8A8A8" stroke-width="1"/><line x1="733.6" y1="90.4" x2="734.6" y2="90.4" stroke="#A8A8A8" stroke-width="1"/><line x1="733.6" y1="93.5" x2="734.6" y2="93.5" stroke="#A8A8A8" stroke-width="1"/><path d="M740 88.6 V84 M737.4 85.8 L740 83.2 L742.6 85.8 M740 95.4 V100 M737.4 98.2 L740 100.8 L742.6 98.2" fill="none" stroke="#4179BD" stroke-width="1.6"/><path d="M753.9 91.2 h6.2 l-3.1 3.2 Z" fill="#666666"/><path d="M729.8 113.1 H744.2 L747 116.7 L737 118.5 V124 H729.8 L733.4 118.5 Z" fill="#BFBFBF"/><rect x="737.7" y="118.8" width="11.6" height="8.5" fill="#FAF4FA" stroke="#BDBDBD" stroke-width="1"/><line x1="742.5" y1="121.5" x2="747" y2="121.5" stroke="#C8C8C8" stroke-width="0.9"/><line x1="742.5" y1="124.5" x2="747" y2="124.5" stroke="#C8C8C8" stroke-width="0.9"/><line x1="740" y1="121.5" x2="741" y2="121.5" stroke="#C8C8C8" stroke-width="0.9"/><line x1="740" y1="124.5" x2="741" y2="124.5" stroke="#C8C8C8" stroke-width="0.9"/><path d="M753.8 119.1 h6.2 l-3.1 3 Z" fill="#C0C0C0"/><path d="M755.8 150.2 V144.7 H761.3" fill="none" stroke="#7a7a7a" stroke-width="1"/><path d="M758.8 147.7 L763.3 152.2" stroke="#7a7a7a" stroke-width="1.1"/><path d="M764.3 148.7 V153.2 H759.8 Z" fill="#7a7a7a"/><rect x="775.5" y="53.5" width="176" height="77" fill="#fff" stroke="#C6C6C6" stroke-width="1"/><path d="M933.5 53.5 H775.5 V130.5 H933.5" fill="none" stroke="#A9B4C0" stroke-width="1"/><rect x="934" y="54" width="17" height="25" fill="#E1E1E1"/><path d="M933.5 53.5 V130.5 M933.5 79.5 H951.5 M933.5 103.5 H951.5 M951.5 53.5 V130.5" stroke="#C6C6C6" fill="none"/><path d="M940.1 68 L943 65.2 L945.9 68 Z" fill="#C8C8C8"/><path d="M940 90.5 h6 l-3.0 3.1 Z" fill="#666666"/><line x1="939.2" y1="114.4" x2="946.8" y2="114.4" stroke="#666" stroke-width="1"/><path d="M940 117 h6 l-3.0 3.1 Z" fill="#666666"/><g fill="none" stroke="#595959" stroke-width="1.15" stroke-linejoin="miter"><rect x="779.6" y="58.6" width="17.9" height="14.6" stroke-width="1.3"/><path d="M789.2 61.6 H795.8 M789.2 64.5 H795.8 M781.2 67.5 H795.8 M781.2 70.5 H795.8" stroke="#B0B0B0" stroke-width="0.9"/><path d="M806 57.1 L824 74.9"/><path d="M832 57.1 L849.6 74.6 M846 74.6 H849.8 V70.6"/><rect x="858.9" y="60" width="16.4" height="12.2"/><ellipse cx="892.9" cy="65.4" rx="8.4" ry="6.8"/><rect x="910.8" y="60" width="16.4" height="12.2" rx="3"/><path d="M788.4 85.3 L796.2 100 H780.8 Z"/><path d="M806 85.6 H814.5 V98.5 H824"/><path d="M832 84.3 H841.4 V97.2 H849.6 M846.8 94.4 L849.8 97.2 L846.8 100"/><path d="M858.6 88.4 H866.6 V84.3 L874.2 91.5 L866.6 98.7 V94.5 H858.6 Z"/><path d="M889.6 83.9 H895.7 V91.4 H899.8 L892.6 99.2 L885.3 91.4 H889.6 Z"/><path d="M910.8 99 V88 L914.5 84.9 H923.6 C920 86.5 920 91 923 91.6 H925.5 Q927.2 91.6 927.2 93.5 V97 Q927.2 99 925.2 99 Z"/><path d="M786.3 108.6 C787 112 782 114.5 783.8 116 C786 117.6 790.5 110.5 793 113.5 C795 116.3 787 121.5 788.7 124 C790 126 793.5 125.5 794.6 122.8 C795.2 120.5 792.5 120 792 122 C791.6 124 792.3 125.5 793.6 126.5" stroke-width="1.1"/><path d="M806 110.2 C816 110.6 823.4 116 823.6 125.8" stroke-width="1.05"/><path d="M831.2 119.8 C834 112 837 110.2 838.6 110.4 C843.5 111 842.5 125.5 850.6 125"  stroke-width="1.05"/><polygon points="918.4,110.1 920.3,115.6 926.1,115.7 921.4,119.2 923.2,124.8 918.4,121.4 913.6,124.8 915.4,119.2 910.7,115.7 916.5,115.6"/></g><rect x="983" y="62" width="11" height="11" fill="#ECC67C"/><rect x="973" y="72.2" width="11" height="11" fill="#ECC67C"/><rect x="966.8" y="55.7" width="14.8" height="14.8" fill="#fff" stroke="#7a7a7a" stroke-width="1.1"/><rect x="985.5" y="74.7" width="14.8" height="14.8" fill="#fff" stroke="#7a7a7a" stroke-width="1.1"/><path d="M981 124 h6.2 l-3.1 3.2 Z" fill="#666666"/><rect x="1022.7" y="56.6" width="31.7" height="31.7" rx="6.5" fill="#fff" stroke="#8A8A8A" stroke-width="1.1"/><path d="M1059 66 V74 L1051.5 81.5 L1047.5 77.5 Z" fill="#7F7F7F"/><path d="M1050.8 82.3 L1049 84.3 L1045 80.2 L1046.8 78.3 Z" fill="#7F7F7F" stroke="#fff" stroke-width="0.5"/><path d="M1032 92.8 C1037 88.5 1038 84 1041.5 82.5 C1045 81.5 1048.6 84.5 1047.6 88 C1046.5 91.5 1041 93.2 1032 92.8 Z" fill="#4179BD"/><ellipse cx="1044.8" cy="85.3" rx="2.3" ry="3.6" transform="rotate(40 1044.8 85.3)" fill="#fff" stroke="#4179BD" stroke-width="0.8"/><path d="M1057 124 h6.2 l-3.1 3.2 Z" fill="#666666"/><rect x="1069.5" y="68.8" width="19" height="3.6" fill="#fff" stroke="#8A8A8A" stroke-width="1"/><path d="M1078.8 55.9 L1084.8 61.9 L1078.5 68.2 L1072.5 62.2 Z" fill="#fff" stroke="#6a6a6a" stroke-width="1.1"/><path d="M1080.4 59.5 V55 C1080.4 52.6 1077.2 52.6 1077.2 55 V57.2" fill="none" stroke="#6a6a6a" stroke-width="1"/><path d="M1082.6 57.6 C1087.8 57.4 1090 62 1086 67.8 C1086.6 64 1086.2 62.4 1084.6 61.4 Z" fill="#4179BD"/><path d="M1082.5 81.8 H1069.8 V93 H1074" fill="none" stroke="#6a6a6a" stroke-width="1.1"/><path d="M1086.2 80.6 L1088.4 82.8 L1078 93 L1074.8 94 L1075.8 90.8 Z" fill="#4179BD"/><path d="M1085 81.8 L1087.2 84" stroke="#F3F3F3" stroke-width="0.8"/><rect x="1069" y="95.1" width="20" height="4.6" fill="#7F7F7F"/><path d="M1075.6 109.4 H1084.6 Q1088.6 109.4 1087.9 113 L1086.6 120 Q1085.9 124.4 1081.6 124.4 L1074 124.4 Q1069.6 124.4 1070.3 120.6 L1071.8 112.6 Q1072.4 109.4 1075.6 109.4 Z" fill="#8C8C8C"/><path d="M1075.8 110.2 H1083 Q1085.6 110.2 1085.1 112.6 L1083.9 117.8 Q1083.4 120 1081 120 L1074 120 Q1071 120 1071.6 117.4 L1072.8 112.4 Q1073.3 110.2 1075.8 110.2 Z" fill="#fff"/><path d="M1083.6 119.2 L1085.8 122.6" stroke="#E6E6E6" stroke-width="0.8"/><path d="M1160.2 61.9 h5.8 l-2.9 3.1 Z" fill="#666666"/><path d="M1189.2 89 h5.8 l-2.9 3.1 Z" fill="#666666"/><path d="M1185.2 116 h5.8 l-2.9 3.1 Z" fill="#666666"/><path d="M1190.3 150.2 V144.7 H1195.8" fill="none" stroke="#7a7a7a" stroke-width="1"/><path d="M1193.3 147.7 L1197.8 152.2" stroke="#7a7a7a" stroke-width="1.1"/><path d="M1198.8 148.7 V153.2 H1194.3 Z" fill="#7a7a7a"/><line x1="1222" y1="63.5" x2="1214" y2="71" stroke="#2E6DB0" stroke-width="2.2"/><circle cx="1224.3" cy="61.2" r="6.2" fill="#fff" stroke="#2E6DB0" stroke-width="1.6"/><path d="M1212.6 92.5 C1212.8 95.2 1214.5 95.6 1219 95.4 M1216.6 93 L1219.4 95.4 L1216.6 97.8" fill="none" stroke="#4179BD" stroke-width="1.1"/><path d="M1217.7 109.4 V123 L1221 120 L1223.4 125.3 L1225.6 124.2 L1223.2 119.2 L1227.4 118.8 Z" fill="#fff" stroke="#6a6a6a" stroke-width="1"/><path d="M1278.9 116.2 h6.2 l-3.1 3.2 Z" fill="#666666"/></svg><svg class="a" style="left:0;top:0" width="400" height="202"><rect x="147.1" y="173" width="15.9" height="15.8" rx="1.2" fill="#8D4BB0"/><rect x="149.1" y="173.9" width="12" height="8" rx="0.6" fill="#fff"/><rect x="151" y="184.1" width="7.4" height="4.7" fill="#fff"/><rect x="152.8" y="185.2" width="3.3" height="3.6" fill="#8D4BB0"/><path d="M183 177.4 L189.8 172.8 L189.2 175.8 L194 175.8 C203.5 175.8 203.5 187.6 194.6 188.2 L194.2 185.2 C199.4 184.6 199.2 179.2 194 179.1 L189.2 179.1 L189.8 182 Z" fill="#3E7EC1"/><path d="M208.8 178 h6.2 l-3.1 3.1 Z" fill="#666666"/><path d="M234.6 174.6 A 6.3 6.3 0 1 0 242.4 179.2" fill="none" stroke="#3E7EC1" stroke-width="3.2"/><path d="M237 174.8 L244.9 173 L243.6 180.6 Z" fill="#3E7EC1"/><rect x="263" y="172.1" width="19" height="1.6" fill="#555"/><rect x="265.8" y="173.7" width="13.3" height="9.6" fill="#fff" stroke="#666" stroke-width="1.1"/><line x1="268" y1="177.4" x2="273.4" y2="177.4" stroke="#AAA" stroke-width="0.9"/><line x1="268" y1="179.4" x2="273.4" y2="179.4" stroke="#AAA" stroke-width="0.9"/><path d="M272.7 184 L268.6 189 H277 Z" fill="#fff" stroke="#666" stroke-width="1.1"/><circle cx="278.1" cy="180.9" r="4.3" fill="#fff" stroke="#666" stroke-width="1"/><path d="M276.6 178.2 L281 180.9 L276.6 183.6 Z" fill="#4CA48A"/><line x1="306" y1="178.3" x2="311.2" y2="178.3" stroke="#666" stroke-width="1"/><path d="M306 181 h5.2 l-2.6 2.8 Z" fill="#666666"/></svg>
<span class="t" style="left:21.30px;top:20.75px;font-size:14.5px;color:#FFFFFF;letter-spacing:-0.100px;">File</span>
<span class="t" style="left:84.00px;top:20.75px;font-size:14.5px;color:#B7472A;letter-spacing:1.129px;">Home</span>
<span class="t" style="left:152.90px;top:20.75px;font-size:14.5px;color:#FFFFFF;letter-spacing:-0.027px;">Insert</span>
<span class="t" style="left:216.00px;top:20.75px;font-size:14.5px;color:#FFFFFF;letter-spacing:0.186px;">Design</span>
<span class="t" style="left:289.30px;top:20.75px;font-size:14.5px;color:#FFFFFF;letter-spacing:-0.013px;">Transitions</span>
<span class="t" style="left:386.00px;top:20.75px;font-size:14.5px;color:#FFFFFF;letter-spacing:0.391px;">Animations</span>
<span class="t" style="left:488.00px;top:20.75px;font-size:14.5px;color:#FFFFFF;letter-spacing:-0.008px;">Slide Show</span>
<span class="t" style="left:588.00px;top:20.75px;font-size:14.5px;color:#FFFFFF;letter-spacing:-0.214px;">Review</span>
<span class="t" style="left:662.30px;top:20.75px;font-size:14.5px;color:#FFFFFF;letter-spacing:0.002px;">View</span>
<span class="t" style="left:721.00px;top:20.75px;font-size:14.5px;color:#FFFFFF;letter-spacing:0.274px;">Office Timeline Pro+</span>
<span class="t" style="left:884.80px;top:20.75px;font-size:14.5px;color:#FFFFFF;letter-spacing:0.781px;">Help</span>
<span class="t" style="left:956.80px;top:20.75px;font-size:14.5px;color:#FFFFFF;letter-spacing:0.301px;">Format</span>
<span class="t" style="left:1065.00px;top:20.75px;font-size:14.5px;color:#FFFFFF;letter-spacing:0.363px;">Tell me what you want to do</span>
<span class="t" style="left:7.60px;top:142.00px;font-size:13px;color:#2b2b2b;letter-spacing:0.161px;">Clipboard</span>
<span class="t" style="left:154.30px;top:142.00px;font-size:13px;color:#2b2b2b;letter-spacing:-0.501px;">Slides</span>
<span class="t" style="left:374.70px;top:142.00px;font-size:13px;color:#2b2b2b;letter-spacing:-0.367px;">Font</span>
<span class="t" style="left:617.00px;top:142.00px;font-size:13px;color:#2b2b2b;letter-spacing:0.190px;">Paragraph</span>
<span class="t" style="left:952.70px;top:142.00px;font-size:13px;color:#2b2b2b;letter-spacing:0.058px;">Drawing</span>
<span class="t" style="left:1238.80px;top:142.00px;font-size:13px;color:#2b2b2b;letter-spacing:0.013px;">Editing</span>
<span class="t" style="left:121.50px;top:241.00px;font-size:13px;color:#444;letter-spacing:-0.668px;">Style</span>
<span class="t" style="left:172.80px;top:241.00px;font-size:13px;color:#444;letter-spacing:-0.739px;">Fill</span>
<span class="t" style="left:208.70px;top:241.00px;font-size:13px;color:#444;letter-spacing:-0.193px;">Outline</span>
<span class="t" style="left:168.40px;top:275.75px;font-size:14.5px;color:#4a4a4a;letter-spacing:-0.093px;font-weight:700;">Theme Colors</span>
<span class="t" style="left:168.00px;top:409.75px;font-size:14.5px;color:#4a4a4a;letter-spacing:-0.138px;font-weight:700;">Standard Colors</span>
<span class="t" style="left:197.60px;top:457.00px;font-size:15px;color:#4a4a4a;letter-spacing:0.105px;"><u>N</u>o Fill</span>
<span class="t" style="left:196.80px;top:488.00px;font-size:15px;color:#4a4a4a;letter-spacing:-0.197px;"><u>M</u>ore Fill Colors...</span>
<span class="t" style="left:196.80px;top:518.00px;font-size:15px;color:#4a4a4a;letter-spacing:-0.028px;"><u>E</u>yedropper</span>
<span class="t" style="left:196.80px;top:548.00px;font-size:15px;color:#4a4a4a;letter-spacing:-0.469px;"><u>P</u>icture...</span>
<span class="t" style="left:196.90px;top:578.00px;font-size:15px;color:#4a4a4a;letter-spacing:-0.238px;"><u>G</u>radient</span>
<span class="t" style="left:196.90px;top:608.00px;font-size:15px;color:#4a4a4a;letter-spacing:-0.041px;"><u>T</u>exture</span>
<span class="t" style="left:9.60px;top:172.00px;font-size:15px;color:#BCBCBC;letter-spacing:-0.372px;">AutoSave</span>
<span class="t" style="left:102.60px;top:174.00px;font-size:13px;color:#CBCBCB;letter-spacing:-0.894px;">Off</span>
<span class="t" style="left:8.80px;top:98.75px;font-size:14.5px;color:#262626;letter-spacing:-0.854px;">Paste</span>
<span class="t" style="left:109.80px;top:98.75px;font-size:14.5px;color:#262626;letter-spacing:0.432px;">New</span>
<span class="t" style="left:103.60px;top:118.75px;font-size:14.5px;color:#262626;letter-spacing:-0.070px;">Slide</span>
<span class="t" style="left:175.90px;top:57.75px;font-size:14.5px;color:#262626;letter-spacing:0.119px;">Layout</span>
<span class="t" style="left:175.90px;top:85.75px;font-size:14.5px;color:#262626;letter-spacing:-0.387px;">Reset</span>
<span class="t" style="left:176.30px;top:113.75px;font-size:14.5px;color:#262626;letter-spacing:0.000px;">Section</span>
<span class="t" style="left:254.80px;top:67.75px;font-size:14.5px;color:#444;letter-spacing:-0.133px;">Segoe UI</span>
<span class="t" style="left:405.80px;top:68.75px;font-size:14.5px;color:#444;letter-spacing:-1.500px;clip-path:inset(0 0 3.6px 0);">11</span>
<span class="t" style="left:465.10px;top:66.00px;font-size:15px;color:#555;letter-spacing:0.000px;">A</span>
<span class="t" style="left:490.10px;top:67.75px;font-size:14.5px;color:#555;letter-spacing:0.000px;">A</span>
<span class="t" style="left:257.90px;top:102.75px;font-size:16.5px;color:#444;letter-spacing:0.000px;font-weight:700;transform:scaleX(.86);transform-origin:0 0;">B</span>
<span class="t" style="left:286.60px;top:101.75px;font-size:18.5px;color:#444;letter-spacing:0.000px;font-weight:700;font-style:italic;font-family:'Liberation Serif',sans-serif;transform:scaleX(1.15);transform-origin:0 0;">I</span>
<span class="t" style="left:310.80px;top:103.50px;font-size:16px;color:#444;letter-spacing:0.000px;font-weight:700;transform:scaleX(.86);transform-origin:0 0;">U</span>
<span class="t" style="left:337.60px;top:102.00px;font-size:18px;color:#444;letter-spacing:0.000px;font-weight:700;text-shadow:1.3px 1.3px 1px rgba(0,0,0,0.45);">S</span>
<span class="t" style="left:358.40px;top:105.75px;font-size:13.5px;color:#555;letter-spacing:-1.208px;text-decoration:line-through;text-decoration-thickness:1px;">abc</span>
<span class="t" style="left:385.90px;top:101.90px;font-size:13.2px;color:#555;letter-spacing:-0.016px;">AV</span>
<span class="t" style="left:423.60px;top:103.75px;font-size:14.5px;color:#666;letter-spacing:-1.500px;">Aa</span>
<span class="t" style="left:469.70px;top:99.25px;font-size:11.5px;color:#555;letter-spacing:0.304px;">ab</span>
<span class="t" style="left:511.80px;top:100.10px;font-size:17.8px;color:#555;letter-spacing:0.000px;">A</span>
<span class="t" style="left:741.10px;top:53.00px;font-size:13px;color:#4179BD;letter-spacing:0.000px;font-weight:700;">A</span>
<span class="t" style="left:596.00px;top:64.00px;font-size:6px;color:#3A74B8;letter-spacing:0.000px;font-weight:700;">1</span>
<span class="t" style="left:595.80px;top:71.00px;font-size:6px;color:#3A74B8;letter-spacing:0.000px;font-weight:700;">2</span>
<span class="t" style="left:595.80px;top:78.00px;font-size:6px;color:#3A74B8;letter-spacing:0.000px;font-weight:700;">3</span>
<span class="t" style="left:781.70px;top:59.85px;font-size:7.3px;color:#4179BD;letter-spacing:0.000px;font-weight:700;">A</span>
<span class="t" style="left:862.40px;top:108.00px;font-size:17px;color:#595959;letter-spacing:0.000px;">{</span>
<span class="t" style="left:889.70px;top:108.00px;font-size:17px;color:#595959;letter-spacing:0.000px;">}</span>
<span class="t" style="left:957.20px;top:98.75px;font-size:14.5px;color:#262626;letter-spacing:0.113px;">Arrange</span>
<span class="t" style="left:1021.40px;top:98.75px;font-size:14.5px;color:#262626;letter-spacing:-0.154px;">Quick</span>
<span class="t" style="left:1015.20px;top:118.75px;font-size:14.5px;color:#262626;letter-spacing:-0.367px;">Styles</span>
<span class="t" style="left:1092.20px;top:56.75px;font-size:14.5px;color:#262626;letter-spacing:-0.129px;">Shape Fill</span>
<span class="t" style="left:1092.20px;top:83.75px;font-size:14.5px;color:#262626;letter-spacing:0.022px;">Shape Outline</span>
<span class="t" style="left:1092.20px;top:110.75px;font-size:14.5px;color:#262626;letter-spacing:-0.097px;">Shape Effects</span>
<span class="t" style="left:1234.90px;top:56.75px;font-size:14.5px;color:#262626;letter-spacing:-0.314px;">Find</span>
<span class="t" style="left:1234.90px;top:83.75px;font-size:14.5px;color:#262626;letter-spacing:-0.106px;">Replace</span>
<span class="t" style="left:1235.10px;top:110.75px;font-size:14.5px;color:#262626;letter-spacing:-0.114px;">Select</span>
<span class="t" style="left:1213.00px;top:79.50px;font-size:11px;color:#666;letter-spacing:0.000px;-webkit-text-stroke:0.35px #666;">a</span>
<span class="t" style="left:1219.30px;top:79.50px;font-size:11px;color:#8B3FB5;letter-spacing:0.000px;-webkit-text-stroke:0.35px #8B3FB5;">b</span>
<span class="t" style="left:1221.20px;top:89.50px;font-size:11px;color:#555;letter-spacing:0.000px;-webkit-text-stroke:0.35px #555;">a</span>
<span class="t" style="left:1227.00px;top:89.50px;font-size:11px;color:#4179BD;letter-spacing:0.000px;-webkit-text-stroke:0.35px #4179BD;">c</span>

</body></html>
